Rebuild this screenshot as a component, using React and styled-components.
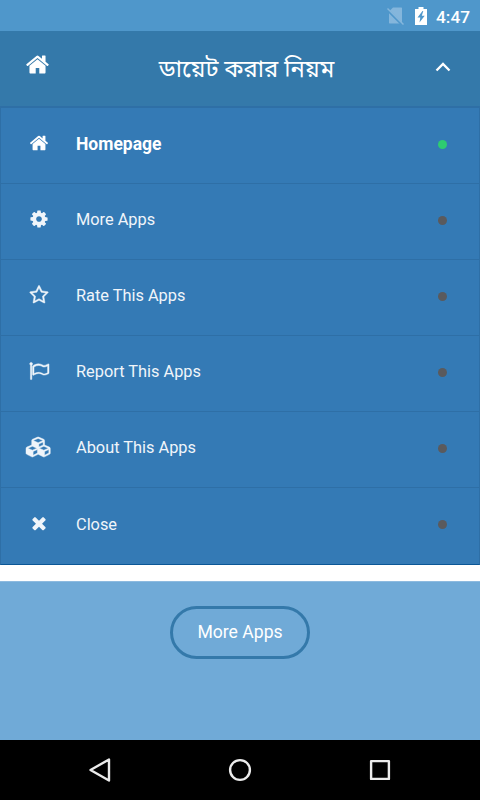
import React from "react";
import styled, { createGlobalStyle } from "styled-components";

const GlobalStyle = createGlobalStyle`
  * { box-sizing: border-box; }
  body { margin: 0; background: #fff; font-family: Roboto, "Noto Sans", sans-serif; }
`;

const Screen = styled.div`
  width: 480px;
  height: 800px;
  display: flex;
  flex-direction: column;
  overflow: hidden;
  background: #fff;
`;

const StatusBar = styled.div`
  height: 31px;
  flex: none;
  display: flex;
  align-items: center;
  justify-content: flex-end;
  padding: 1px 10px 0 0;
  background: #4f97cb;
  color: #fff;
`;

const NoSim = styled.svg`
  width: 18px;
  height: 18px;
  margin-right: 10px;
`;

const Battery = styled.svg`
  width: 12px;
  height: 18px;
  margin-right: 9px;
`;

const Clock = styled.span`
  width: 34px;
  padding-top: 1px;
  font-size: 17.3px;
  line-height: 22px;
  font-weight: 500;
  white-space: nowrap;
`;

const Header = styled.header`
  height: 75px;
  flex: none;
  display: grid;
  grid-template-columns: 75px 1fr 75px;
  align-items: center;
  justify-items: center;
  background: #3479aa;
  color: #fff;
`;

const Title = styled.h1`
  margin: 0;
  padding: 1px 0 0 13px;
  font-family: Roboto, "Noto Sans Bengali", sans-serif;
  font-size: 23.8px;
  line-height: 36px;
  font-weight: 400;
  white-space: nowrap;
`;

const Glyph = styled.svg`
  display: block;
  height: ${(p) => p.$size}px;
  width: ${(p) => (p.$size * (p.$wide ? 2304 : 1792)) / 1792}px;
  margin-bottom: ${(p) => p.$lift || 0}px;
  fill: currentColor;
  stroke: currentColor;
  stroke-width: ${(p) => p.$weight || 0};
  overflow: visible;
`;

const Chevron = styled.svg`
  width: 16px;
  height: 10px;
  margin: 0 9px 4px 10px;
`;

const Menu = styled.nav`
  height: 459px;
  flex: none;
  display: grid;
  grid-template-rows: repeat(6, 1fr);
  background: #347ab5;
  border: 1px solid #2e6fa6;
  border-top-width: 2px;
  border-bottom: 1px solid #0b5796;
`;

const Item = styled.a`
  display: grid;
  grid-template-columns: 75px 1fr 73px;
  align-items: center;
  padding-bottom: 3px;
  color: ${(p) => (p.$active ? "#fff" : "#f0f5fa")};
  font-size: ${(p) => (p.$active ? 17.5 : 16.35)}px;
  font-weight: ${(p) => (p.$active ? 700 : 400)};
  border-bottom: ${(p) => (p.$last ? "0" : "1.5px solid #2e6fa6")};
`;

const IconCell = styled.span`
  display: flex;
  justify-content: center;
`;

const Label = styled.span`
  line-height: 24px;
`;

const Dot = styled.span`
  justify-self: center;
  width: 9px;
  height: 9px;
  border-radius: 50%;
  background: ${(p) => (p.$on ? "#2ecc71" : "#5a5a5d")};
`;

const Content = styled.main`
  flex: 1;
  margin-top: 16px;
  padding-top: 24px;
  display: flex;
  justify-content: center;
  align-items: flex-start;
  background: #70aad7;
  border-top: 1px solid #8dbadf;
`;

const MoreButton = styled.button`
  width: 140px;
  height: 53px;
  padding: 0 0 2px;
  border: 3px solid #3479aa;
  border-radius: 27px;
  background: transparent;
  color: #fff;
  font: 400 17.6px Roboto, sans-serif;
`;

const NavBar = styled.footer`
  height: 60px;
  flex: none;
  display: flex;
  align-items: center;
  justify-content: center;
  gap: 116px;
  background: #000;
`;

const NavIcon = styled.svg`
  width: 24px;
  height: 24px;
  fill: none;
  stroke: #ebebeb;
  stroke-width: 2.4;
  stroke-linejoin: round;
`;

const paths = {
  home: "M1472 992v480q0 26-19 45t-45 19h-384v-384h-256v384h-384q-26 0-45-19t-19-45v-480q0-1 .5-3t.5-3l575-474 575 474q1 2 1 6zm223-69l-62 74q-8 9-21 11h-3q-13 0-21-7l-692-577-692 577q-12 8-24 7-13-2-21-11l-62-74q-8-10-7-23.5t11-21.5l719-599q32-26 76-26t76 26l244 204v-195q0-14 9-23t23-9h192q14 0 23 9t9 23v408l219 182q10 8 11 21.5t-7 23.5z",
  cog: "M1152 896q0-106-75-181t-181-75-181 75-75 181 75 181 181 75 181-75 75-181zm512-109v222q0 12-8 23t-20 13l-185 28q-19 54-39 91 35 50 107 138 10 12 10 25t-9 23q-27 37-99 108t-94 71q-12 0-26-9l-138-108q-44 23-91 38-16 136-29 186-7 28-36 28h-222q-14 0-24.5-8.5t-11.5-21.5l-28-184q-49-16-90-37l-141 107q-10 9-25 9-14 0-25-11-126-114-165-168-7-10-7-23 0-12 8-23 15-21 51-66.5t54-70.5q-27-50-41-99l-183-27q-13-2-21-12.5t-8-23.5v-222q0-12 8-23t19-13l186-28q14-46 39-92-40-57-107-138-10-12-10-24 0-10 9-23 26-36 98.5-107.5t94.5-71.5q13 0 26 10l138 107q44-23 91-38 16-136 29-186 7-28 36-28h222q14 0 24.5 8.5t11.5 21.5l28 184q49 16 90 37l142-107q9-9 24-9 13 0 25 10 129 119 165 170 7 8 7 22 0 12-8 23-15 21-51 66.5t-54 70.5q26 50 41 98l183 28q13 2 21 12.5t8 23.5z",
  star: "M1201 1004l306-297-422-62-189-382-189 382-422 62 306 297-73 421 378-199 377 199zm527-357q0 22-26 48l-363 354 86 500q1 7 1 20 0 50-41 50-19 0-40-12l-449-236-449 236q-22 12-40 12-21 0-31.5-14.5t-10.5-35.5q0-6 2-20l86-500-364-354q-25-27-25-48 0-37 56-46l502-73 225-455q19-41 49-41t49 41l225 455 502 73q56 9 56 46z",
  flag: "M1664 1063v-616q-169 91-306 91-82 0-145-32-100-49-184-76.5t-178-27.5q-173 0-403 127v599q245-113 433-113 55 0 103.5 7.5t98 26 77 31 82.5 39.5l28 14q44 22 101 22 120 0 293-92zm-1344-807q0 35-17.5 64t-46.5 46v1266q0 14-9 23t-23 9h-64q-14 0-23-9t-9-23v-1266q-29-17-46.5-46t-17.5-64q0-53 37.5-90.5t90.5-37.5 90.5 37.5 37.5 90.5zm1472 64v763q0 39-35 57-10 5-17 9-218 116-369 116-88 0-158-35l-28-14q-64-33-99-48t-91-29-114-14q-102 0-235.5 44t-228.5 102q-15 9-33 9-16 0-32-8-32-19-32-56v-742q0-35 31-55 35-21 78.5-42.5t114-52 152.5-49.5 155-19q112 0 209 31t209 86q38 19 89 19 122 0 310-112 22-12 31-17 31-16 62 2 31 20 31 55z",
  cubes: "M640 1632l384-192v-314l-384 164v342zm-64-454l404-173-404-173-404 173zm1088 454l384-192v-314l-384 164v342zm-64-454l404-173-404-173-404 173zm-448-293l384-165v-266l-384 164v267zm-64-379l441-189-441-189-441 189zm1088 518v416q0 36-19 67t-52 47l-448 224q-25 14-57 14t-57-14l-448-224q-4-2-7-4-2 2-7 4l-448 224q-25 14-57 14t-57-14l-448-224q-33-16-52-47t-19-67v-416q0-38 21.500-70t56.500-48l434-186v-400q0-38 21.500-70t56.500-48l448-192q23-10 50-10t50 10l448 192q35 16 56.500 48t21.500 70v400l434 186q36 16 57 48t21 70z",
  times: "M1490 1322q0 40-28 68l-136 136q-28 28-68 28t-68-28l-294-294-294 294q-28 28-68 28t-68-28l-136-136q-28-28-28-68t28-68l294-294-294-294q-28-28-28-68t28-68l136-136q28-28 68-28t68 28l294 294 294-294q28-28 68-28t68 28l136 136q28 28 28 68t-28 68l-294 294 294 294q28 28 28 68z",
};

function Icon({ name, size, lift, weight }) {
  const wide = name === "cubes";
  return (
    <Glyph
      $size={size}
      $wide={wide}
      $lift={lift}
      $weight={weight}
      viewBox={wide ? "0 0 2304 1792" : "0 0 1792 1792"}
    >
      <path d={paths[name]} />
    </Glyph>
  );
}

const items = [
  { icon: "home", label: "Homepage", active: true },
  { icon: "cog", label: "More Apps" },
  { icon: "star", label: "Rate This Apps", weight: 40 },
  { icon: "flag", label: "Report This Apps", weight: 40 },
  { icon: "cubes", label: "About This Apps", weight: 40 },
  { icon: "times", label: "Close" },
];

export default function App() {
  return (
    <>
      <GlobalStyle />
      <Screen>
        <StatusBar>
          <NoSim viewBox="0 0 18 18">
            <path d="M6 0.500h8.500l.5.5v15l-.5.5h-12l-.5-.5V4.500z" fill="#84b6dc" />
            <path d="M0 2.500l16 16" stroke="#4f97cb" strokeWidth="2.500" />
            <path d="M0.500 1.500l16 16" stroke="#84b6dc" strokeWidth="1.500" />
          </NoSim>
          <Battery viewBox="0 0 12 18">
            <path d="M3.5 0h5v2H12v16H0V2h3.500z" fill="#fff" />
            <path d="M7.500 4L2.500 10.500H5.300L4.500 15.500L9.700 8.800H6.800L8.300 4z" fill="#4f97cb" />
          </Battery>
          <Clock>4:47</Clock>
        </StatusBar>
        <Header>
          <Icon name="home" size={25} lift={9} />
          <Title lang="bn">ডায়েট করার নিয়ম</Title>
          <Chevron viewBox="0 0 16 10">
            <path d="M1.500 8.500L8 2L14.500 8.500" fill="none" stroke="#fff" strokeWidth="2.300" />
          </Chevron>
        </Header>
        <Menu>
          {items.map((item, i) => (
            <Item key={item.label} $active={item.active} $last={i === items.length - 1}>
              <IconCell>
                <Icon name={item.icon} size={20} lift={3} weight={item.weight} />
              </IconCell>
              <Label>{item.label}</Label>
              <Dot $on={item.active} />
            </Item>
          ))}
        </Menu>
        <Content>
          <MoreButton>More Apps</MoreButton>
        </Content>
        <NavBar>
          <NavIcon viewBox="0 0 24 24">
            <path d="M21 1.500V22.500L2.500 12z" />
          </NavIcon>
          <NavIcon viewBox="0 0 24 24">
            <circle cx="12" cy="12" r="9.900" />
          </NavIcon>
          <NavIcon viewBox="0 0 24 24">
            <rect x="3.100" y="3.100" width="17.800" height="17.800" />
          </NavIcon>
        </NavBar>
      </Screen>
    </>
  );
}
